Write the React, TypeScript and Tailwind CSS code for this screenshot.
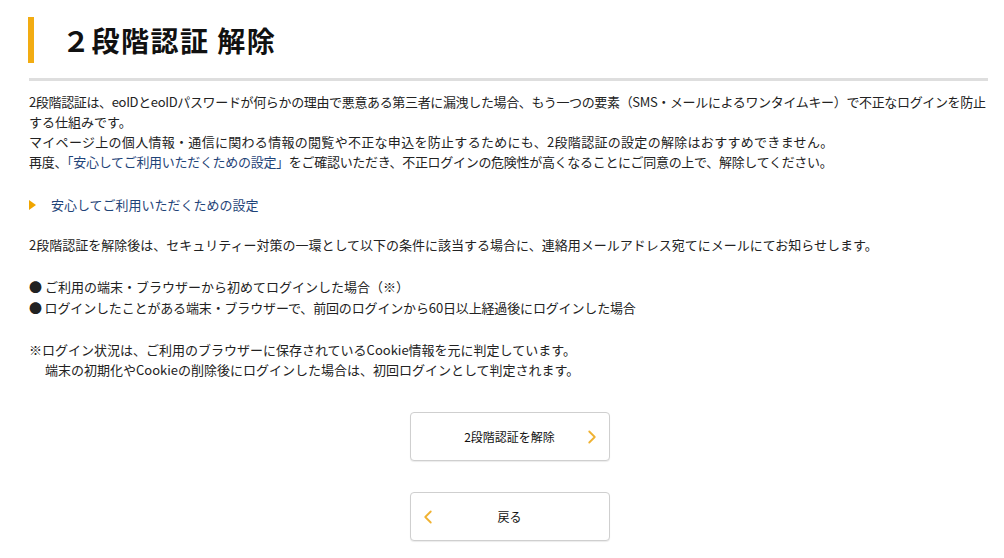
import { ChevronLeft, ChevronRight } from "lucide-react";

const font = "font-['Noto_Sans_CJK_JP','Noto_Sans',sans-serif]";

export default function App() {
  return (
    <div className={`${font} w-[1004px] h-[558px] bg-white text-[#222] overflow-hidden`}>
      {/* heading */}
      <div className="flex items-center pl-[28px] pt-[17px]">
        <span className="block w-[6px] h-[46px] bg-[#f2ac12]" />
        <h1 className="ml-[28px] text-[28px] leading-[46px] font-bold tracking-[1.5px] text-[#111]">２段階認証 解除</h1>
      </div>
      <div className="ml-[29px] mr-[16px] mt-[15px] h-[3px] bg-[#dedede]" />

      <div className="pl-[29px] pr-[14px] pt-[11px] text-[13px] leading-[20px] whitespace-nowrap">
        {/* intro */}
        <p>
          <span className="tracking-[-0.35px]">
            2段階認証は、eoIDとeoIDパスワードが何らかの理由で悪意ある第三者に漏洩した場合、もう一つの要素（SMS・メールによるワンタイムキー）で不正なログインを防止
          </span>
          <br />
          する仕組みです。
          <br />
          <span className="tracking-[0.3px]">
            マイページ上の個人情報・通信に関わる情報の閲覧や不正な申込を防止するためにも、2段階認証の設定の解除はおすすめできません。
          </span>
          <br />
          <span className="tracking-[-0.3px]">
            再度、<span className="text-[#1f4478]">「安心してご利用いただくための設定」</span>
            をご確認いただき、不正ログインの危険性が高くなることにご同意の上で、解除してください。
          </span>
        </p>

        {/* link */}
        <div className="mt-[23px] flex items-center">
          <span className="block w-0 h-0 border-y-[5px] border-y-transparent border-l-[7px] border-l-[#f0a500]" />
          <a href="#" className="ml-[15px] text-[#1f4478]">
            安心してご利用いただくための設定
          </a>
        </div>

        <p className="mt-[20px]">
          2段階認証を解除後は、セキュリティー対策の一環として以下の条件に該当する場合に、連絡用メールアドレス宛てにメールにてお知らせします。
        </p>

        <ul className="mt-[22px]">
          <li>● ご利用の端末・ブラウザーから初めてログインした場合（※）</li>
          <li className="mt-[1px] tracking-[-0.15px]">● ログインしたことがある端末・ブラウザーで、前回のログインから60日以上経過後にログインした場合</li>
        </ul>

        <p className="mt-[22px]">
          ※ログイン状況は、ご利用のブラウザーに保存されているCookie情報を元に判定しています。
          <br />
          <span className="pl-[16px]">端末の初期化やCookieの削除後にログインした場合は、初回ログインとして判定されます。</span>
        </p>

        {/* buttons */}
        <div className="mt-[32px] flex flex-col items-center gap-[31px]">
          <button className="relative w-[200px] h-[49px] rounded-[4px] border border-[#cfcfcf] bg-white shadow-[0_1px_1px_rgba(0,0,0,0.08)] text-[12px] text-[#111]">
            2段階認証を解除
            <ChevronRight className="absolute right-[6px] top-1/2 -translate-y-1/2 text-[#f0b232]" size={22} strokeWidth={2} />
          </button>
          <button className="relative w-[200px] h-[49px] rounded-[4px] border border-[#cfcfcf] bg-white shadow-[0_1px_1px_rgba(0,0,0,0.08)] text-[12px] text-[#111]">
            <ChevronLeft className="absolute left-[6px] top-1/2 -translate-y-1/2 text-[#f0b232]" size={22} strokeWidth={2} />
            戻る
          </button>
        </div>
      </div>
    </div>
  );
}
